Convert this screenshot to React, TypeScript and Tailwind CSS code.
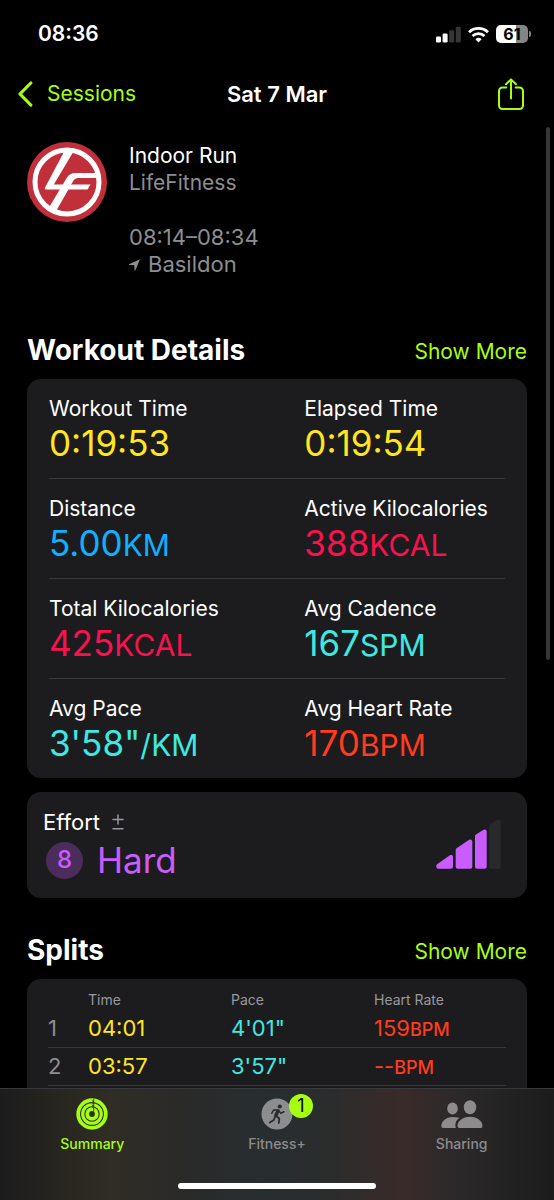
import type { ReactNode } from 'react';

interface Metric {
  label: string;
  value: string;
  unit?: string;
  color: string;
}

interface Split {
  index: number;
  time: string;
  pace: string;
  heartRate: string;
}

const metricRows: Metric[][] = [
  [
    { label: 'Workout Time', value: '0:19:53', color: 'text-[#ffe620]' },
    { label: 'Elapsed Time', value: '0:19:54', color: 'text-[#ffe620]' },
  ],
  [
    { label: 'Distance', value: '5.00', unit: 'KM', color: 'text-[#0fb0ff]' },
    { label: 'Active Kilocalories', value: '388', unit: 'KCAL', color: 'text-[#fa1150]' },
  ],
  [
    { label: 'Total Kilocalories', value: '425', unit: 'KCAL', color: 'text-[#fa1150]' },
    { label: 'Avg Cadence', value: '167', unit: 'SPM', color: 'text-[#3fe8e0]' },
  ],
  [
    { label: 'Avg Pace', value: '3\'58"', unit: '/KM', color: 'text-[#3fe8e0]' },
    { label: 'Avg Heart Rate', value: '170', unit: 'BPM', color: 'text-[#ff3b20]' },
  ],
];

const splits: Split[] = [
  { index: 1, time: '04:01', pace: '4\'01"', heartRate: '159' },
  { index: 2, time: '03:57', pace: '3\'57"', heartRate: '--' },
];

const StatusBar = () => (
  <div className="flex h-16 items-center justify-between pl-[38px] pr-[23px] pt-1">
    <span className="text-[21px] font-semibold leading-7">08:36</span>
    <div className="flex items-center gap-[7px]">
      {/* Signal */}
      <svg width="25" height="17" viewBox="0 0 25 17" fill="#fff">
        <rect x="0" y="10.5" width="5" height="6" rx="1.3" />
        <rect x="6.6" y="7.5" width="5" height="9" rx="1.3" />
        <rect x="13.2" y="4.2" width="5" height="12.3" rx="1.3" fill="#363636" />
        <rect x="19.8" y="0.7" width="5" height="15.8" rx="1.3" fill="#363636" />
      </svg>
      {/* Wifi */}
      <svg width="21" height="17" viewBox="0 0 21 17" fill="none" stroke="#fff" strokeWidth="2.8">
        <path d="M1 6.3a13.7 13.7 0 0 1 19 0" />
        <path d="M4.5 10a8.6 8.6 0 0 1 12 0" />
        <path d="M10.5 16.4 7.4 13.2a4.5 4.5 0 0 1 6.2 0Z" fill="#fff" stroke="none" />
      </svg>
      <div className="flex items-center gap-px">
        <span className="flex h-[18px] w-8 items-center justify-center rounded-[5px] bg-linear-to-r from-white from-61% to-[#858585] to-61% text-base font-bold leading-none text-black">
          61
        </span>
        <span className="h-1.5 w-0.5 rounded-r-full bg-[#858585]" />
      </div>
    </div>
  </div>
);

const NavBar = () => (
  <header className="grid h-[60px] grid-cols-[1fr_auto_1fr] items-center px-[18px]">
    <button type="button" className="flex items-center gap-3.5 text-[21px] leading-7 text-[#a6ff12]">
      <svg width="15" height="26" viewBox="0 0 15 26" fill="none" stroke="currentColor" strokeWidth="3.2" strokeLinecap="round" strokeLinejoin="round">
        <path d="M12.8 2 2 13l10.8 11" />
      </svg>
      Sessions
    </button>
    <h1 className="text-[22px] font-semibold leading-7">Sat 7 Mar</h1>
    <button type="button" aria-label="Share" className="justify-self-end pr-3 text-[#a6ff12]">
      <svg width="26" height="33" viewBox="0 0 26 33" fill="none" stroke="currentColor" strokeWidth="2" strokeLinecap="round" strokeLinejoin="round">
        <path d="M8.3 9.5H4.5A3.5 3.5 0 0 0 1 13v14.5A3.5 3.5 0 0 0 4.5 31h17a3.5 3.5 0 0 0 3.5-3.5V13A3.5 3.5 0 0 0 21.5 9.5h-3.8" />
        <path d="M13 20.5V1.5M8 6.3l5-4.9 5 4.9" />
      </svg>
    </button>
  </header>
);

const LifeFitnessLogo = () => (
  <svg width="80" height="80" viewBox="0 0 80 80" className="shrink-0">
    <circle cx="40" cy="40" r="40" fill="#c1303a" />
    <circle cx="40" cy="40" r="32" fill="none" stroke="#fff" strokeWidth="5" />
    <g fill="#fff">
      <path d="M38.5 7h9.5L26.8 42.4H63.5l-3 5.2H19.5q-2.5 0-1.3-2.4Z" />
      <path d="M20.5 68 40 35.5q2.8-4.5 8-4.5h24v5H50.5q-2.5 0-4 2.5L28 71Z" />
    </g>
  </svg>
);

const WorkoutSummary = () => (
  <section className="flex gap-[22px] pt-[18px]">
    <LifeFitnessLogo />
    <div className="text-[22px] leading-[27px] text-[#8d8d92]">
      <h2 className="text-[21px] text-white">Indoor Run</h2>
      <p className="text-[21px]">LifeFitness</p>
      <p className="pt-7">08:14–08:34</p>
      <p className="flex items-center gap-2">
        <svg width="11" height="12" viewBox="0 0 11 12" fill="currentColor">
          <path d="M11 .3 0 5.3q-.2.5.3.6L5.3 6.2l.3 5.2q.3.5.7 0Z" />
        </svg>
        Basildon
      </p>
    </div>
  </section>
);

const SectionHeading = ({ title }: { title: string }) => (
  <div className="flex items-center justify-between pb-[11px]">
    <h2 className="text-[28px] font-bold leading-9">{title}</h2>
    <a href="#more" className="pt-1 text-[21px] leading-8 text-[#a6ff12]">
      Show More
    </a>
  </div>
);

const MetricCell = ({ label, value, unit, color }: Metric) => (
  <div>
    <dt className="text-[21px] leading-7">{label}</dt>
    <dd className={`text-[35px] leading-10 ${color}`}>
      {value}
      {unit && <span className="text-[30px] leading-none">{unit}</span>}
    </dd>
  </div>
);

const WorkoutDetails = () => (
  <dl className="rounded-[14px] bg-[#1c1c1e] px-[22px]">
    {metricRows.map((row) => (
      <div
        key={row[0].label}
        className="grid grid-cols-[14fr_11fr] border-b border-[#37373a] pb-[15px] pt-4 whitespace-nowrap last:border-b-0"
      >
        {row.map((metric) => (
          <MetricCell key={metric.label} {...metric} />
        ))}
      </div>
    ))}
  </dl>
);

const EffortCard = () => (
  <section className="mt-3.5 flex items-center justify-between rounded-[14px] bg-[#1c1c1e] pb-[18px] pl-4 pr-[26px] pt-4">
    <div>
      <h3 className="flex items-center gap-3 text-[22px] leading-7">
        Effort
        <svg width="12" height="16" viewBox="0 0 12 16" stroke="#98989d" strokeWidth="1.5" strokeLinecap="round">
          <path d="M6 1v9M1 5.5h10M1 14.8h10" />
        </svg>
      </h3>
      <p className="flex items-center gap-3.5 pl-[3px] pt-1 text-[35px] leading-10 text-[#c95cff]">
        <span className="flex size-[37px] items-center justify-center rounded-full bg-[#4b2c5b] text-2xl font-medium">8</span>
        Hard
      </p>
    </div>
    <svg width="65" height="50" viewBox="0 0 65 50" fill="#c95cff" stroke="#c95cff" strokeWidth="4" strokeLinejoin="round">
      <path d="M2.3 46.8 15 37.8V47.7H2.3Z" />
      <path d="M21.7 31 34.3 22.5V47.7H21.7Z" />
      <path d="M41 17.3 48.7 12.5V47.7H41Z" />
      <path d="M55.3 7 62.7 2.5V47.7H55.3Z" fill="#29292c" stroke="#29292c" />
    </svg>
  </section>
);

const SplitsTable = () => (
  <div className="flex-1 rounded-t-[14px] bg-[#1c1c1e] px-[21px] pt-3">
    <table className="w-full table-fixed text-left">
      <thead>
        <tr className="text-sm leading-[18px] text-[#98989d]">
          <td className="w-10" />
          <th scope="col" className="w-[143px] font-normal">Time</th>
          <th scope="col" className="w-[143px] font-normal">Pace</th>
          <th scope="col" className="font-normal">Heart Rate</th>
        </tr>
      </thead>
      <tbody>
        {splits.map((split) => (
          <tr key={split.index} className="h-[38px] border-b border-[#37373a] text-[22px] leading-7">
            <th scope="row" className="font-normal text-[#8d8d92]">{split.index}</th>
            <td className="text-[#ffe620]">{split.time}</td>
            <td className="text-[#3fe8e0]">{split.pace}</td>
            <td className="text-[#ff3b20]">
              {split.heartRate}
              <span className="text-lg font-medium leading-none">BPM</span>
            </td>
          </tr>
        ))}
      </tbody>
    </table>
  </div>
);

const RingsIcon = () => (
  <svg width="32" height="32" viewBox="0 0 32 32">
    <circle cx="16" cy="16" r="15.7" fill="currentColor" />
    <g fill="none" stroke="#2f2f1e" strokeWidth="1.1">
      <circle cx="16" cy="16" r="11.4" />
      <circle cx="16" cy="16" r="7.2" />
      <path d="M17.7 .5v13M15.8 2.4l1.9 1.6-1.9 1.6M15.8 6.8l1.9 1.4-1.9 1.4" strokeWidth="0.9" />
    </g>
    <circle cx="16" cy="16" r="2.9" fill="#2f2f1e" />
  </svg>
);

const RunnerIcon = () => (
  <svg width="32" height="32" viewBox="0 0 32 32">
    <circle cx="16" cy="16" r="15.5" fill="#8b8d8e" />
    <g fill="none" stroke="#292c2d" strokeLinecap="round" strokeLinejoin="round">
      <circle cx="18.8" cy="8.5" r="2.1" fill="#292c2d" stroke="none" />
      <path d="M17 12.8 14.8 17.5" strokeWidth="3.4" />
      <path d="M16.5 12H12.5L10.8 15.3M17.8 12.8 19.8 15.3 23 13.8" strokeWidth="1.5" />
      <path d="M15.2 18 18.3 20.5 17.8 25M14.2 18.5 12.8 22 8.8 24.5" strokeWidth="1.8" />
    </g>
  </svg>
);

const SharingIcon = () => (
  <svg width="42" height="32" viewBox="0 0 42 32" fill="currentColor">
    <ellipse cx="11.5" cy="10.5" rx="5.3" ry="6" />
    <path d="M18.5 19.8C15 22 13.8 25.500 14.8 30H2Q.3 30 .3 28C.3 23.5 5 19 11.5 19q4 0 7 .8Z" />
    <ellipse cx="29" cy="9.3" rx="6.2" ry="7" />
    <path d="M29 18.8c7.5 0 12.5 4.7 12.5 9.2q0 2-1.7 2H18.3q-1.8 0-1.8-2c0-4.5 5-9.2 12.5-9.2Z" />
  </svg>
);

interface TabProps {
  label: string;
  active?: boolean;
  badge?: number;
  children: ReactNode;
}

const Tab = ({ label, active, badge, children }: TabProps) => (
  <button
    type="button"
    className={`flex flex-col items-center gap-1 text-sm font-medium ${active ? 'text-[#a6ff12]' : 'text-[#8d8b8c]'}`}
  >
    <span className="relative">
      {children}
      {badge && (
        <span className="absolute -right-5 -top-1 flex size-6 items-center justify-center rounded-full bg-[#a6ff12] text-lg font-normal leading-none text-black">
          {badge}
        </span>
      )}
    </span>
    {label}
  </button>
);

const TabBar = () => (
  <footer className="flex h-28 shrink-0 flex-col items-center justify-between border-t border-[#38393a] bg-[linear-gradient(90deg,#1c1c1d_0%,#26251f_10%,#302d25_20%,#2a2a29_33%,#272e30_47%,#2a2c2d_58%,#392b29_73%,#2a2829_84%,#1c1c1d_100%)] pb-[11px] pt-[9px]">
    <nav className="grid w-full grid-cols-3">
      <Tab label="Summary" active>
        <RingsIcon />
      </Tab>
      <Tab label="Fitness+" badge={1}>
        <RunnerIcon />
      </Tab>
      <Tab label="Sharing">
        <SharingIcon />
      </Tab>
    </nav>
    <div className="h-1.5 w-[198px] rounded-full bg-white" />
  </footer>
);

export default function App() {
  return (
    <div className="flex h-screen flex-col bg-black font-['Inter','Liberation_Sans',sans-serif] text-white">
      <StatusBar />
      <NavBar />
      <main className="relative flex min-h-0 flex-1 flex-col overflow-hidden px-[27px]">
        {/* Scroll indicator */}
        <div className="absolute right-1 top-[3px] h-[533px] w-1 rounded-full bg-[#363636]" />
        <WorkoutSummary />
        <div className="pt-[54px]">
          <SectionHeading title="Workout Details" />
          <WorkoutDetails />
          <EffortCard />
        </div>
        <div className="flex flex-1 flex-col pt-[34px]">
          <SectionHeading title="Splits" />
          <SplitsTable />
        </div>
      </main>
      <TabBar />
    </div>
  );
}
